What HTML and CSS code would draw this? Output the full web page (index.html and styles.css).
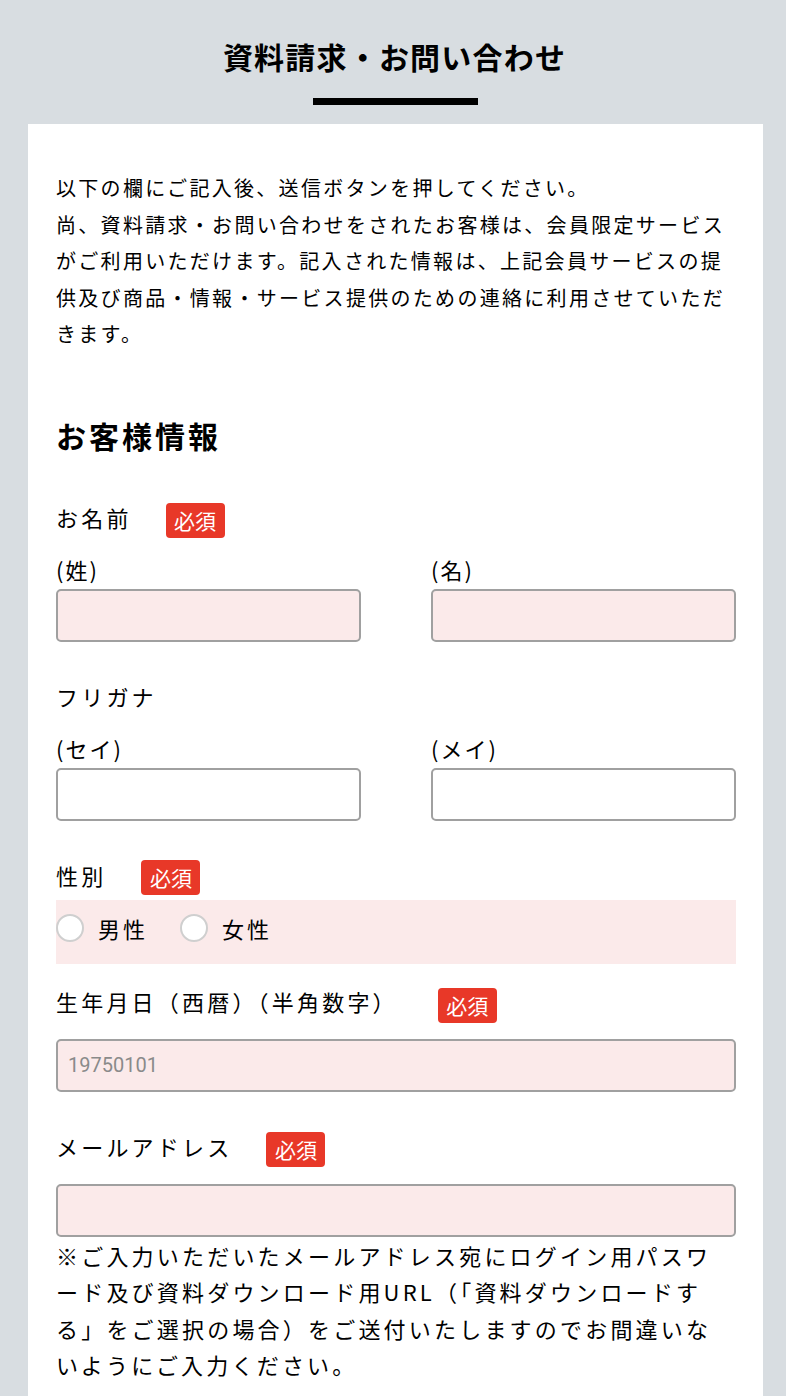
FILE: index.html
```html
<!DOCTYPE html>
<html lang="ja">
<head>
<meta charset="utf-8">
<title>資料請求・お問い合わせ</title>
<link rel="stylesheet" href="styles.css">
</head>
<body>
<header class="page-head">
  <h1 class="page-title">資料請求・お問い合わせ</h1>
  <div class="title-bar"></div>
</header>
<main class="card">
  <p class="intro">以下の欄にご記入後、送信ボタンを押してください。<br>尚、資料請求・お問い合わせをされたお客様は、会員限定サービスがご利用いただけます。記入された情報は、上記会員サービスの提供及び商品・情報・サービス提供のための連絡に利用させていただきます。</p>

  <h2 class="section-title">お客様情報</h2>

  <div class="field field-first">
    <div class="field-head"><span class="label">お名前</span><span class="badge">必須</span></div>
    <div class="pair">
      <div class="col"><div class="sub-label">(姓)</div><input class="input req" type="text"></div>
      <div class="col"><div class="sub-label">(名)</div><input class="input req" type="text"></div>
    </div>
  </div>

  <div class="field">
    <div class="field-head"><span class="label">フリガナ</span></div>
    <div class="pair">
      <div class="col"><div class="sub-label">(セイ)</div><input class="input" type="text"></div>
      <div class="col"><div class="sub-label">(メイ)</div><input class="input" type="text"></div>
    </div>
  </div>

  <div class="field">
    <div class="field-head"><span class="label">性別</span><span class="badge badge-sex">必須</span></div>
    <div class="radio-band">
      <label class="radio"><span class="circle"></span><span class="radio-text">男性</span></label>
      <label class="radio"><span class="circle"></span><span class="radio-text">女性</span></label>
    </div>
  </div>

  <div class="field field-birth">
    <div class="field-head"><span class="label">生年月日（西暦）（半角数字）</span><span class="badge badge-birth">必須</span></div>
    <input class="input req input-gap" type="text" placeholder="19750101">
  </div>

  <div class="field">
    <div class="field-head"><span class="label">メールアドレス</span><span class="badge">必須</span></div>
    <input class="input req input-gap" type="text">
    <p class="note">※ご入力いただいたメールアドレス宛にログイン用パスワード及び資料ダウンロード用URL（「資料ダウンロードする」をご選択の場合）をご送付いたしますのでお間違いないようにご入力ください。</p>
  </div>
</main>
</body>
</html>
```

FILE: styles.css
```css
* { box-sizing: border-box; }

body {
  margin: 0;
  background: #d8dde1;
  color: #000;
  font-family: "Noto Sans CJK JP", "Noto Sans", sans-serif;
}

.page-head {
  padding-top: 36px;
  display: flex;
  flex-direction: column;
  align-items: center;
}

.page-title {
  margin: 0;
  font-size: 30px;
  line-height: 40px;
  font-weight: 700;
  letter-spacing: 1.2px;
  padding-left: 3px;
}

.title-bar {
  margin-top: 22px;
  margin-left: 4px;
  width: 165px;
  height: 7px;
  background: #000;
}

.card {
  margin: 19px 23px 0 28px;
  background: #fff;
  padding: 46px 27px 80px 28px;
}

.intro {
  margin: 0;
  font-size: 20px;
  line-height: 36.5px;
  letter-spacing: 2.3px;
}

.section-title {
  margin: 62px 0 0;
  font-size: 30px;
  line-height: 40px;
  font-weight: 700;
  letter-spacing: 3px;
}

.field { margin-top: 36px; }
.field-first { margin-top: 44px; }
.field-birth { margin-top: 19px; }

.field-head {
  display: flex;
  align-items: flex-start;
  height: 40px;
}

.label {
  font-size: 22px;
  line-height: 36px;
  letter-spacing: 3.2px;
}

.badge {
  margin-left: 34px;
  margin-top: 4px;
  width: 59px;
  height: 35px;
  border-radius: 4px;
  background: #e83828;
  color: #fff;
  font-size: 21px;
  line-height: 35px;
  text-align: center;
}

.badge-sex { margin-top: 3px; margin-left: 35px; }
.badge-birth { margin-top: 5px; margin-left: 40px; }

.pair {
  margin-top: 14px;
  display: grid;
  grid-template-columns: 1fr 1fr;
  column-gap: 70px;
}

.col { display: flex; flex-direction: column; }

.sub-label {
  font-size: 22px;
  line-height: 32px;
  letter-spacing: 2px;
  margin-bottom: 4px;
}

.input {
  display: block;
  width: 100%;
  height: 53px;
  border: 2px solid #a0a0a0;
  border-radius: 5px;
  background: #fff;
  padding: 0 10px;
  font-family: "Roboto", "Noto Sans", sans-serif;
  font-size: 20px;
  color: #333;
  outline: none;
}

.input.req { background: #fbeaea; }

.input::placeholder { color: #8a8a8a; }

.input-gap { margin-top: 16px; }

.radio-band {
  margin-top: 3px;
  background: #fbeaea;
  height: 64px;
  padding-top: 12px;
  display: flex;
  align-items: flex-start;
  gap: 32px;
}

.radio {
  display: flex;
  align-items: center;
  gap: 14px;
}

.circle {
  width: 28px;
  height: 28px;
  border-radius: 50%;
  border: 2px solid #cfcfcf;
  background: #fff;
}

.radio-text {
  font-size: 22px;
  line-height: 32px;
  letter-spacing: 3px;
}

.note {
  margin: 0;
  font-size: 22px;
  line-height: 36.5px;
  letter-spacing: 3.2px;
}
```
